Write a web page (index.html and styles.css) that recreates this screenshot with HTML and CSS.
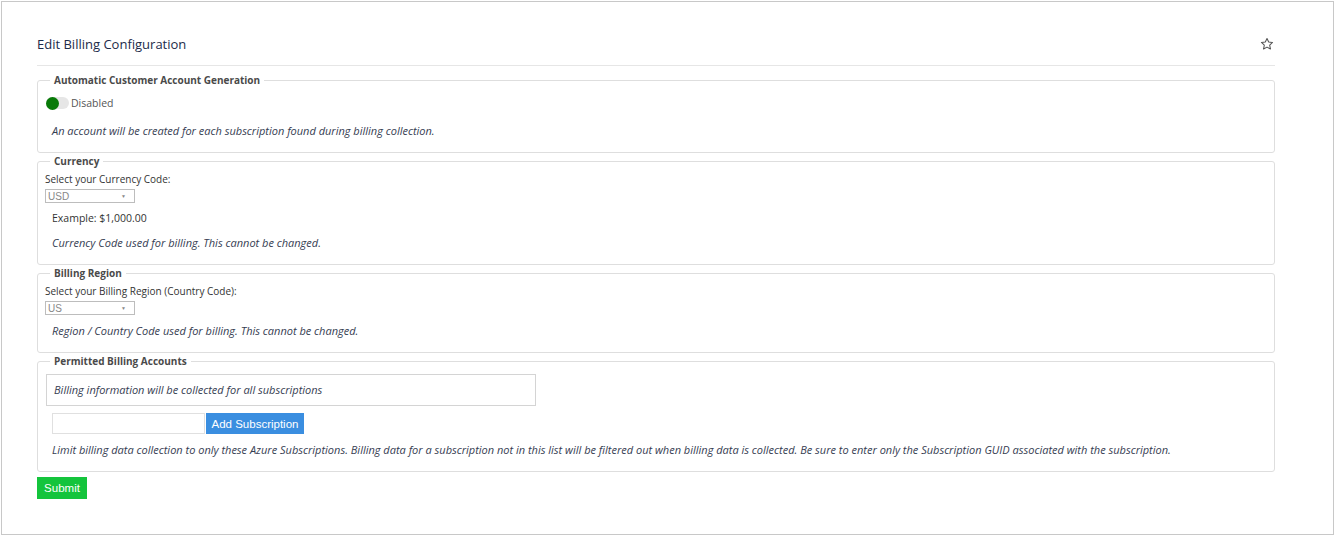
FILE: index.html
```html
<!DOCTYPE html>
<html lang="en">
<head>
    <meta charset="UTF-8">
    <meta name="viewport" content="width=device-width, initial-scale=1.0">
    <title>Edit Billing Configuration</title>
    <link rel="stylesheet" href="styles.css">
</head>
<body>

    <div class="frame">
        <div class="panel">
            <div class="panel-header">
                <h2>Edit Billing Configuration</h2>
                <svg class="star" width="14" height="14" viewBox="0 0 24 24">
                    <path d="M12 2.5l2.9 6.1 6.6.8-4.9 4.6 1.3 6.6L12 17.3l-5.9 3.3 1.3-6.6-4.9-4.6 6.6-.8z" fill="none" stroke="#555" stroke-width="1.8" stroke-linejoin="round"/>
                </svg>
            </div>

            <form>
                <fieldset>
                    <legend>Automatic Customer Account Generation</legend>
                    <div class="toggle-row">
                        <span class="toggle"><span class="knob"></span></span>
                        <span class="toggle-label">Disabled</span>
                    </div>
                    <p class="help">An account will be created for each subscription found during billing collection.</p>
                </fieldset>

                <fieldset>
                    <legend>Currency</legend>
                    <label class="field-label">Select your Currency Code:</label>
                    <div class="select"><span>USD</span><span class="caret">&#9660;</span></div>
                    <p class="example">Example: $1,000.00</p>
                    <p class="help">Currency Code used for billing. This cannot be changed.</p>
                </fieldset>

                <fieldset>
                    <legend>Billing Region</legend>
                    <label class="field-label">Select your Billing Region (Country Code):</label>
                    <div class="select"><span>US</span><span class="caret">&#9660;</span></div>
                    <p class="help after-select">Region / Country Code used for billing. This cannot be changed.</p>
                </fieldset>

                <fieldset>
                    <legend>Permitted Billing Accounts</legend>
                    <div class="info-box">Billing information will be collected for all subscriptions</div>
                    <div class="add-row">
                        <input type="text" class="sub-input">
                        <button type="button" class="button blue">Add Subscription</button>
                    </div>
                    <p class="help after-input">Limit billing data collection to only these Azure Subscriptions. Billing data for a subscription not in this list will be filtered out when billing data is collected. Be sure to enter only the Subscription GUID associated with the subscription.</p>
                </fieldset>

                <button type="button" class="button green">Submit</button>
            </form>
        </div>
    </div>

</body>
</html>
```

FILE: styles.css
```css
body {
    margin: 0;
    font-family: "Open Sans", Arial, sans-serif;
    color: #2b2f3a;
    background-color: #fff;
}
.frame {
    margin: 1px 0 0 1px;
    width: 1331px;
    height: 532px;
    border: 1px solid #c8c8c8;
}
.panel {
    width: 1238px;
    margin-left: 35px;
    padding-top: 31px;
}
.panel-header {
    display: flex;
    justify-content: space-between;
    align-items: center;
    height: 22px;
    padding-bottom: 10px;
    border-bottom: 1px solid #e6e6e6;
    margin-bottom: 8px;
}
.panel-header h2 {
    margin: 0;
    font-size: 13px;
    font-weight: 500;
    color: #1c2b4a;
}
.star {
    margin-right: 1px;
}
fieldset {
    margin: 0 0 2px 0;
    padding: 0 7px 14px 7px;
    border: 1px solid #dedede;
    border-radius: 3px;
}
legend {
    margin-left: 5px;
    padding: 0 4px;
    font-size: 10px;
    line-height: 12px;
    font-weight: 700;
    color: #4a4a4a;
}
.toggle-row {
    display: flex;
    align-items: center;
    height: 14px;
    margin-top: 10px;
    margin-left: 1px;
}
.toggle {
    display: inline-block;
    width: 23px;
    height: 12px;
    border-radius: 6px;
    background-color: #e6e6e6;
    position: relative;
}
.knob {
    position: absolute;
    left: 0;
    top: -0.5px;
    width: 13px;
    height: 13px;
    border-radius: 50%;
    background-color: #087a08;
}
.toggle-label {
    margin-left: 2px;
    font-size: 10.5px;
    color: #555;
}
.help {
    margin: 13px 0 0 7px;
    font-size: 11px;
    line-height: 15px;
    font-style: italic;
    color: #363d52;
}
.example + .help {
    margin-top: 10px;
}
.after-select {
    margin-top: 8px;
}
.after-input {
    margin-top: 8px;
}
.field-label {
    display: block;
    margin-top: 5px;
    font-size: 10px;
    line-height: 14px;
    color: #333;
}
.select {
    display: flex;
    justify-content: space-between;
    align-items: center;
    box-sizing: border-box;
    width: 90px;
    height: 14px;
    margin-top: 3px;
    padding: 0 2px;
    border: 1px solid #bdbdbd;
    font-family: "Liberation Sans", Arial, sans-serif;
    font-size: 10px;
    color: #888;
}
.caret {
    font-size: 5px;
    margin-right: 6px;
}
.example {
    margin: 8px 0 0 7px;
    font-size: 10.5px;
    line-height: 14px;
    color: #333;
}
.info-box {
    width: 474px;
    margin: 7px 0 0 1px;
    padding: 8px 7px;
    border: 1px solid #d4d4d4;
    font-size: 11px;
    line-height: 14px;
    font-style: italic;
    color: #363d52;
}
.add-row {
    display: flex;
    margin: 7px 0 0 7px;
}
.sub-input {
    width: 153px;
    height: 21px;
    box-sizing: border-box;
    border: 1px solid #e0e0e0;
    margin: 0;
}
.button {
    border: none;
    cursor: pointer;
    padding: 0;
    white-space: nowrap;
    font-family: "Liberation Sans", Arial, sans-serif;
    color: #fff;
}
.blue {
    height: 21px;
    width: 98px;
    margin-left: 1px;
    font-size: 11.5px;
    background-color: #3a8ee0;
}
.green {
    display: block;
    height: 22px;
    width: 50px;
    margin-top: 5px;
    font-size: 11.5px;
    background-color: #14c43c;
}
```
